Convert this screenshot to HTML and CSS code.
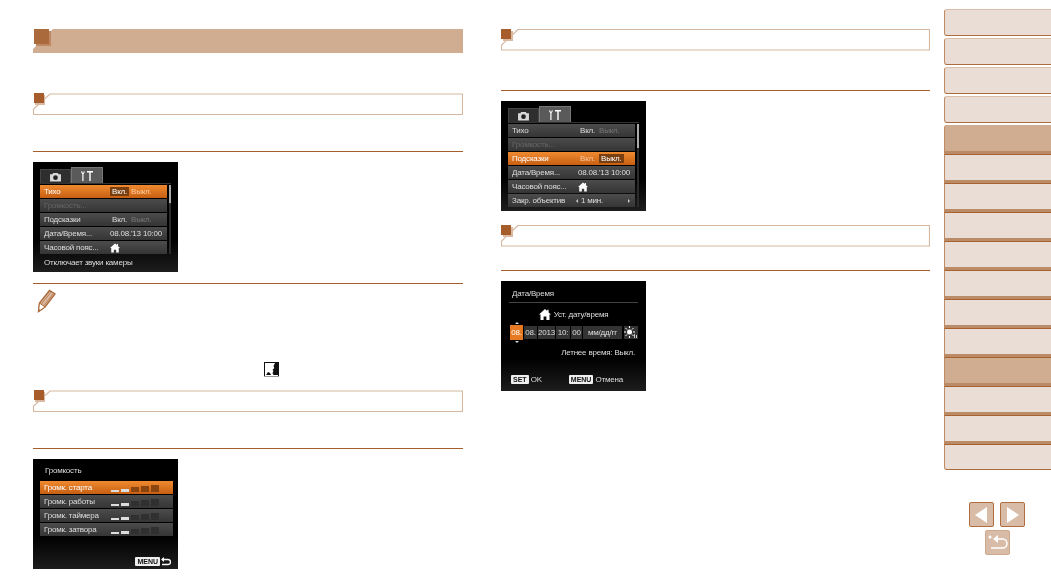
FILE: index.html
```html
<!DOCTYPE html>
<html lang="ru">
<head>
  <meta charset="UTF-8">
  <title>Настройки камеры</title>
  <link rel="stylesheet" href="styles.css">
</head>
<body>
<svg class="defs" width="0" height="0">
  <symbol id="i-cam" viewBox="0 0 14 11"><path d="M4.500 1h5l1 1.500H13v8H1v-8h2.500z" fill="#d8d8d8"/><circle cx="7" cy="6.300" r="2.600" fill="#222"/></symbol>
  <symbol id="i-tools" viewBox="0 0 12 10"><path d="M.3 0v1.800L1.300 3v7h1.200V3l1-1.200V0l-.8.6v1h-1.400v-1z" fill="#fff"/><path d="M6 0h6v1.500H9.700V10H8.300V1.500H6z" fill="#fff"/></symbol>
  <symbol id="i-home" viewBox="0 0 12 11"><path d="M6 0l2.200 2V.8h1.400v2.600L12 5.600h-1.500V11H7.400V7.500H4.600V11H1.500V5.600H0z" fill="#fff"/></symbol>
</svg>

<div class="page">
  <main class="col">
    <svg class="head-main" width="430" height="24" viewBox="0 0 430 24">
      <polygon points="0,24 0,20 20,0 430,0 430,24" fill="#d0ac91"/>
      <rect x="3" y="2" width="15" height="15" fill="#bf8863"/>
      <rect x="1" y="0" width="15" height="15" fill="#aa6a3c"/>
    </svg>

    <svg class="head-sec first" width="430" height="22" viewBox="0 0 430 22">
      <polygon points=".5,21.500 .5,16 17,1 429.500,1 429.500,21.500" fill="#fff" stroke="#d6b7a0" stroke-width="1.200"/>
      <rect x="2" y="2" width="10" height="10" fill="#d9b9a2"/>
      <rect x="1" y="0" width="10" height="10" fill="#a65d2b"/>
    </svg>
    <div class="rule"></div>

    <div class="screen">
      <div class="tabs">
        <span class="tab"><svg width="13" height="10"><use href="#i-cam"/></svg></span>
        <span class="tab on"><svg width="12" height="10"><use href="#i-tools"/></svg></span>
      </div>
      <div class="menu">
        <div class="rows">
          <div class="row sel"><span>Тихо</span><span class="val"><b class="box">Вкл.</b><i>Выкл.</i></span></div>
          <div class="row off"><span>Громкость...</span></div>
          <div class="row"><span>Подсказки</span><span class="val"><b>Вкл.</b><i>Выкл.</i></span></div>
          <div class="row"><span>Дата/Время...</span><span class="val">08.08.'13 10:00</span></div>
          <div class="row"><span>Часовой пояс...</span><span class="val"><svg width="10" height="10"><use href="#i-home"/></svg></span></div>
        </div>
        <div class="scroll"><span class="thumb"></span></div>
      </div>
      <div class="hint">Отключает звуки камеры</div>
    </div>

    <div class="rule note-rule"></div>
    <div class="note">
      <svg class="pencil" width="19" height="24" viewBox="0 0 19 24">
        <path d="M1.500 22.500L2.500 14 12.500 1.500 18 5 8 18z" fill="#dcb9a0" stroke="#ab6a3c" stroke-width="1.400"/>
        <path d="M4.500 15L14 3M7 16.500L16 5" stroke="#ab6a3c" stroke-width=".7"/>
        <path d="M2.500 14L8 18 1.500 22.500z" fill="#fff" stroke="#ab6a3c" stroke-width="1"/>
        <path d="M1.500 22.500l.3-2.500 2 1.300z" fill="#ab6a3c"/>
      </svg>
      <svg class="silent" width="15" height="15" viewBox="0 0 15 15">
        <rect width="15" height="15" fill="#111"/>
        <rect x="1" y="1" width="13" height="13" fill="#fff"/>
        <path d="M14 1h-3L9.500 4l.8 2-1.800 2 1 1-1 2 1 2H14z" fill="#111"/>
        <path d="M2 13l2-3 2 1 1 2z" fill="#111"/>
        <rect y="14" width="15" height="1" fill="#999"/>
      </svg>
    </div>

    <svg class="head-sec" width="430" height="22" viewBox="0 0 430 22">
      <polygon points=".5,21.500 .5,16 17,1 429.500,1 429.500,21.500" fill="#fff" stroke="#d6b7a0" stroke-width="1.200"/>
      <rect x="2" y="2" width="10" height="10" fill="#d9b9a2"/>
      <rect x="1" y="0" width="10" height="10" fill="#a65d2b"/>
    </svg>
    <div class="rule"></div>

    <div class="screen">
      <div class="title">Громкость</div>
      <div class="rows vol">
        <div class="row sel"><span>Громк. старта</span><span class="bars lit"><u></u><u></u><u></u><u></u><u></u></span></div>
        <div class="row"><span>Громк. работы</span><span class="bars"><u></u><u></u><u></u><u></u><u></u></span></div>
        <div class="row"><span>Громк. таймера</span><span class="bars"><u></u><u></u><u></u><u></u><u></u></span></div>
        <div class="row"><span>Громк. затвора</span><span class="bars"><u></u><u></u><u></u><u></u><u></u></span></div>
      </div>
      <div class="foot end">
        <span class="badge">MENU</span>
        <svg width="10" height="9" viewBox="0 0 10 9"><path d="M1 2.500h6a2.300 2.300 0 0 1 0 5H1" fill="none" stroke="#fff" stroke-width="1.300"/><path d="M0 2.500L3 0v5z" fill="#fff"/></svg>
      </div>
    </div>
  </main>

  <section class="col col-2">
    <svg class="head-sec top" width="429" height="22" viewBox="0 0 429 22">
      <polygon points=".5,21 .5,16 17,.5 428.500,.5 428.500,21" fill="#fff" stroke="#d6b7a0" stroke-width="1.200"/>
      <rect x="2" y="2" width="10" height="10" fill="#d9b9a2"/>
      <rect x="0" y="0" width="10" height="10" fill="#a65d2b"/>
    </svg>
    <div class="rule short"></div>

    <div class="screen">
      <div class="tabs">
        <span class="tab"><svg width="13" height="10"><use href="#i-cam"/></svg></span>
        <span class="tab on"><svg width="12" height="10"><use href="#i-tools"/></svg></span>
      </div>
      <div class="menu">
        <div class="rows">
          <div class="row"><span>Тихо</span><span class="val"><b>Вкл.</b><i>Выкл.</i></span></div>
          <div class="row off"><span>Громкость...</span></div>
          <div class="row sel"><span>Подсказки</span><span class="val"><em>Вкл.</em><b class="box">Выкл.</b></span></div>
          <div class="row"><span>Дата/Время...</span><span class="val">08.08.'13 10:00</span></div>
          <div class="row"><span>Часовой пояс...</span><span class="val"><svg width="10" height="10"><use href="#i-home"/></svg></span></div>
          <div class="row"><span>Закр. объектив</span><span class="val pick"><span>1 мин.</span></span></div>
        </div>
        <div class="scroll"><span class="thumb short-thumb"></span></div>
      </div>
    </div>

    <svg class="head-sec mid" width="429" height="22" viewBox="0 0 429 22">
      <polygon points=".5,21 .5,16 17,.5 428.500,.5 428.500,21" fill="#fff" stroke="#d6b7a0" stroke-width="1.200"/>
      <rect x="2" y="2" width="10" height="10" fill="#d9b9a2"/>
      <rect x="0" y="0" width="10" height="10" fill="#a65d2b"/>
    </svg>
    <div class="rule mid-rule"></div>

    <div class="screen date">
      <div class="title lined">Дата/Время</div>
      <div class="where"><svg width="12" height="11"><use href="#i-home"/></svg>Уст. дату/время</div>
      <div class="fields">
        <span class="cell hot">08.</span>
        <span class="cell c-day">08.</span>
        <span class="cell c-year">2013</span>
        <span class="cell c-h">10:</span>
        <span class="cell c-m">00</span>
        <span class="cell c-fmt">мм/дд/гг</span>
        <span class="cell c-sun">
          <svg width="14" height="13" viewBox="0 0 14 13"><circle cx="5.500" cy="6" r="2.500" fill="#fff"/><path d="M5.500 0v2M5.500 10v2M0 6h2M9 6h2M1.500 2l1.500 1.500M8 8.500l1.500 1.500M9.500 2L8 3.500M3 8.500L1.500 10" stroke="#fff"/><path d="M10 8h1v4h-1zM12 9h1v3h-1z" fill="#ccc"/></svg>
        </span>
      </div>
      <div class="dst">Летнее время: Выкл.</div>
      <div class="foot spread">
        <span class="act"><span class="badge">SET</span>OK</span>
        <span class="act"><span class="badge">MENU</span>Отмена</span>
      </div>
    </div>
  </section>

  <nav class="side">
    <div class="tab-list">
      <a class="item loose"></a>
      <a class="item loose"></a>
      <a class="item loose"></a>
      <a class="item loose"></a>
      <a class="item first cur"></a>
      <a class="item"></a>
      <a class="item"></a>
      <a class="item"></a>
      <a class="item"></a>
      <a class="item"></a>
      <a class="item"></a>
      <a class="item"></a>
      <a class="item cur"></a>
      <a class="item"></a>
      <a class="item"></a>
      <a class="item last"></a>
    </div>
    <div class="arrows">
      <a class="btn"><svg width="13" height="16" viewBox="0 0 13 16"><path d="M12 0v16L0 8z" fill="#fff"/></svg></a>
      <a class="btn"><svg width="13" height="16" viewBox="0 0 13 16"><path d="M1 0v16l12-8z" fill="#fff"/></svg></a>
    </div>
    <a class="btn back">
      <svg width="20" height="17" viewBox="0 0 20 17"><circle cx="2" cy="3" r="1.500" fill="#fff"/><path d="M9 5h5.500a4.500 4.500 0 0 1 0 9H3" fill="none" stroke="#fff" stroke-width="1.500"/><path d="M5 5l5-4v8z" fill="#fff"/></svg>
    </a>
  </nav>
</div>
</body>
</html>
```

FILE: styles.css
```css
* {
  margin: 0;
  padding: 0;
  box-sizing: border-box;
}

body {
  background: #fff;
  font-family: "Liberation Sans", Arial, sans-serif;
  overflow: hidden;
}

svg {
  display: block;
}

.defs {
  position: absolute;
}

.page {
  display: flex;
  align-items: flex-start;
  padding-left: 33px;
}

.col {
  width: 430px;
  padding-top: 29px;
}

.col-2 {
  width: 429px;
  margin-left: 38px;
}

.head-sec.first {
  margin-top: 40px;
}

.head-sec.mid {
  margin-top: 14px;
}

.rule {
  height: 1px;
  margin-top: 36px;
  margin-bottom: 10px;
  background: #a95d2a;
}

.rule.short {
  margin-top: 39px;
}

.rule.mid-rule {
  margin-top: 23px;
}

.rule.note-rule {
  margin-top: 11px;
  margin-bottom: 0;
}

.note {
  height: 106px;
  padding: 5px 0 0 4px;
}

.silent {
  margin: 49px 0 0 227px;
}

/* camera screens */
.screen {
  width: 145px;
  height: 110px;
  padding: 5px 7px 0;
  background: linear-gradient(#000 70%, #1d1d1d);
  color: #dedede;
  font-size: 8px;
  letter-spacing: -.2px;
  filter: blur(.4px);
}

.tabs {
  display: flex;
  align-items: flex-end;
  height: 17px;
  border-bottom: 1px solid #333;
}

.tab {
  display: flex;
  align-items: center;
  justify-content: center;
  width: 31px;
  height: 14px;
  background: #2e2e2e;
  border: 1px solid #444;
  border-bottom: 0;
}

.tab.on {
  width: 32px;
  height: 16px;
  background: #5a5a5a;
  border-color: #777;
}

.menu {
  display: flex;
  gap: 2px;
  margin-top: 1px;
}

.rows {
  display: flex;
  flex-direction: column;
  gap: 1px;
  width: 128px;
}

.row {
  display: grid;
  grid-template-columns: 70px 1fr;
  align-items: center;
  height: 13px;
  padding-left: 4px;
  background: linear-gradient(#4c4c4c, #353535);
  white-space: nowrap;
}

.row > span:first-child {
  margin-right: -4px;
}

.row.sel {
  background: linear-gradient(#f08a30, #c75f12);
  color: #fff;
}

.row.off {
  color: #666;
}

.val {
  display: flex;
  align-items: center;
  margin-left: -4px;
}

.val b, .val em {
  font-weight: normal;
  font-style: normal;
}

.val b {
  padding: 0 2px;
  margin-right: 2px;
}

.val em {
  color: #f6c9a0;
  padding: 0 2px;
  margin-right: 2px;
}

.val i {
  font-style: normal;
  color: #777;
}

.val .box {
  background: #7a3f10;
  color: #fff;
}

.row.sel .val i {
  color: #ffcf9e;
}

.pick {
  justify-content: space-between;
  padding-right: 3px;
}

.pick::before {
  content: "";
  border: 2px solid transparent;
  border-right-color: #ccc;
  margin-left: -4px;
}

.pick::after {
  content: "";
  border: 2px solid transparent;
  border-left-color: #ccc;
}

.pick span {
  margin-right: auto;
  margin-left: 3px;
}

.scroll {
  width: 2px;
  height: 69px;
  background: #2c2c2c;
}

.thumb {
  display: block;
  height: 18px;
  background: #aaa;
}

.thumb.short-thumb {
  height: 24px;
}

.col-2 .scroll {
  height: 83px;
}

.hint {
  margin-top: 4px;
  padding-left: 4px;
}

.title {
  padding: 2px 0 0 5px;
  height: 13px;
}

/* volume */
.vol {
  width: 133px;
  margin-top: 4px;
}

.vol .row {
  grid-template-columns: 67px 1fr;
  padding-left: 4px;
}

.bars {
  display: flex;
  align-items: flex-end;
  gap: 2px;
  height: 9px;
}

.bars u {
  display: block;
  width: 8px;
  height: 7px;
  background: #303030;
}

.bars u:nth-child(1) {
  height: 2px;
  background: #ddd;
}

.bars u:nth-child(2) {
  height: 3px;
  background: #ddd;
}

.bars u:nth-child(3) {
  height: 5px;
}

.bars u:nth-child(4) {
  height: 6px;
}

.bars.lit u:nth-child(3), .bars.lit u:nth-child(4), .bars.lit u:nth-child(5) {
  background: #8a4510;
}

.foot {
  display: flex;
  align-items: center;
}

.foot.end {
  justify-content: flex-end;
  gap: 1px;
  margin-top: 21px;
}

.badge {
  display: inline-block;
  padding: 0 2px;
  background: #eee;
  color: #111;
  font-size: 7px;
  font-weight: bold;
  line-height: 9px;
  letter-spacing: 0;
  border-radius: 1px;
}

/* date screen */
.date {
  padding: 7px 8px 0;
}

.title.lined {
  height: 15px;
  padding: 1px 0 0 3px;
  border-bottom: 1px solid #444;
}

.where {
  display: flex;
  align-items: center;
  justify-content: center;
  gap: 3px;
  margin-top: 6px;
}

.fields {
  display: flex;
  gap: 1px;
  align-items: center;
  height: 15px;
  margin-top: 5px;
  margin-left: 1px;
  position: relative;
}

.fields::before {
  content: "";
  position: absolute;
  left: 5px;
  top: -3px;
  border: 2px solid transparent;
  border-top: 0;
  border-bottom-color: #ddd;
}

.fields::after {
  content: "";
  position: absolute;
  left: 5px;
  bottom: -3px;
  border: 2px solid transparent;
  border-bottom: 0;
  border-top-color: #ddd;
}

.cell {
  display: flex;
  flex-shrink: 0;
  align-items: center;
  justify-content: center;
  width: 13px;
  height: 13px;
  background: #333;
}

.cell.hot {
  height: 15px;
  background: #e67a22;
  color: #fff;
}

.c-year {
  width: 17px;
}

.c-h {
  width: 14px;
}

.c-m {
  width: 11px;
}

.c-fmt {
  width: 39px;
}

.c-sun {
  width: 14px;
  margin-left: 1px;
}

.dst {
  margin-top: 8px;
  padding-right: 3px;
  text-align: right;
}

.foot.spread {
  gap: 27px;
  margin-top: 18px;
  padding-left: 2px;
}

.act {
  display: flex;
  align-items: center;
  gap: 2px;
}

/* right side list */
.side {
  display: flex;
  flex-direction: column;
  align-items: center;
  width: 107px;
  margin-left: 14px;
  padding-top: 9px;
}

.tab-list {
  width: 100%;
}

.item {
  display: block;
  height: 29px;
  background: #eaddd5;
  border-left: 1px solid #c08a62;
  border-top: 1px solid #a8622f;
  border-bottom: 3px solid #bb8a66;
}

.item.loose {
  height: 27px;
  margin-bottom: 2px;
  border: 1px solid #c08a62;
  border-top-color: #dcbda8;
  border-bottom-color: #ad6a3c;
  border-right: 0;
  border-radius: 3px 0 0 3px;
}

.item.first {
  border-top: 0;
  border-top-left-radius: 3px;
}

.item.cur {
  background: #d0ac91;
}

.item.last {
  height: 26px;
  border-bottom: 1px solid #ad6a3c;
  border-bottom-left-radius: 3px;
}

.arrows {
  display: flex;
  gap: 6px;
  margin-top: 32px;
  margin-right: 1px;
}

.btn {
  display: flex;
  align-items: center;
  justify-content: center;
  width: 25px;
  height: 25px;
  background: #d9bca8;
  border: 1px solid #b06e40;
  border-radius: 2px;
}

.btn.back {
  margin-top: 3px;
  border-color: #cfa98e;
}
```
